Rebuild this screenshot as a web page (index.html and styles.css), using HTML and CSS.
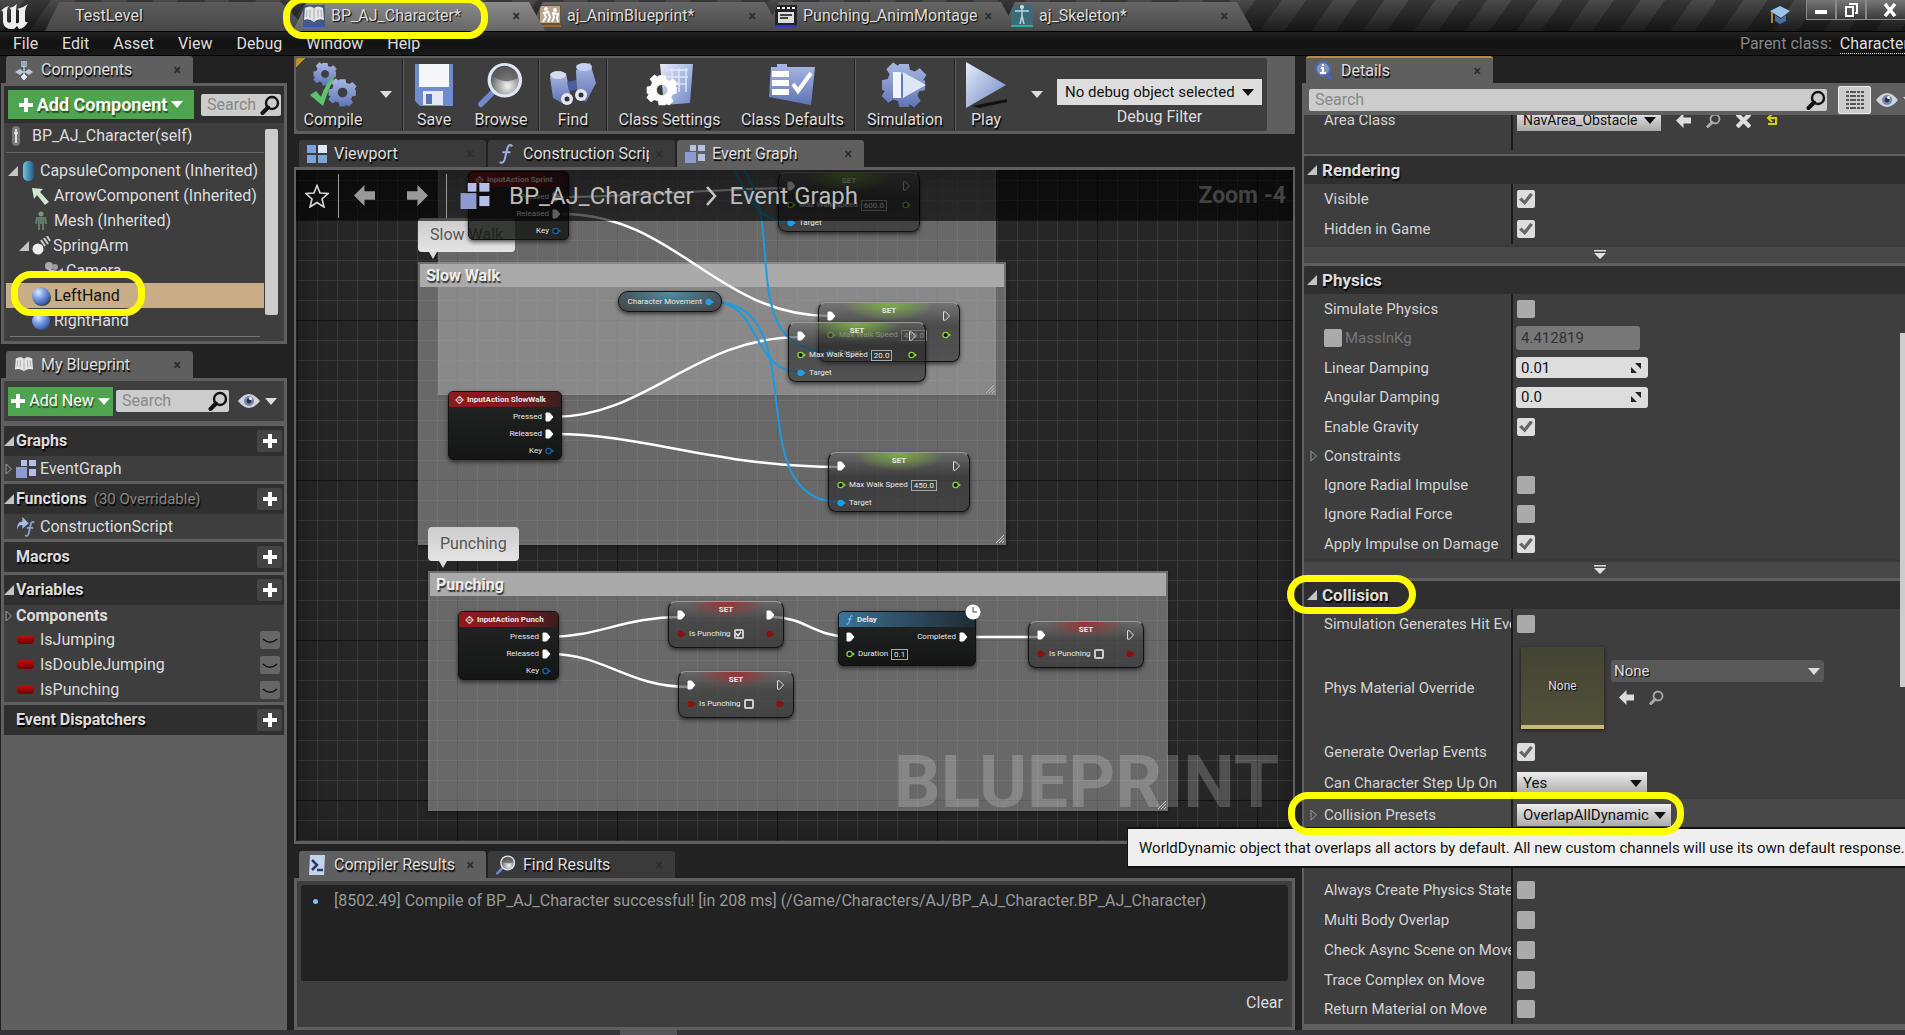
FILE: index.html
```html
<!DOCTYPE html>
<html lang="en">
<head>
<meta charset="utf-8">
<title>BP_AJ_Character</title>
<link rel="stylesheet" href="styles.css">
</head>
<body>
<svg class="defs" aria-hidden="true">
  <defs>
    <linearGradient id="ice" x1="0" y1="0" x2="1" y2="1"><stop offset="0" stop-color="#e6ecfa"/><stop offset="1" stop-color="#6f86c4"/></linearGradient>
    <linearGradient id="steel" x1="0" y1="0" x2="0" y2="1"><stop offset="0" stop-color="#a9b8e4"/><stop offset="1" stop-color="#5f74b4"/></linearGradient>
    <linearGradient id="cyl" x1="0" y1="0" x2="1" y2="0"><stop offset="0" stop-color="#6fc3e6"/><stop offset="1" stop-color="#1f5a7c"/></linearGradient>
    <radialGradient id="ball" cx=".35" cy=".3" r=".8"><stop offset="0" stop-color="#dfe8ff"/><stop offset=".5" stop-color="#6f93dd"/><stop offset="1" stop-color="#2c4a96"/></radialGradient>
    <radialGradient id="lens" cx=".6" cy=".7" r=".8"><stop offset="0" stop-color="#f4f4f4"/><stop offset=".5" stop-color="#9a9a9a"/><stop offset="1" stop-color="#333"/></radialGradient>
    <symbol id="search" viewBox="0 0 20 20"><circle cx="12" cy="8" r="6" fill="none" stroke="currentColor" stroke-width="2.4"/><path d="M8 12.500L2.500 18" stroke="currentColor" stroke-width="4" stroke-linecap="round"/></symbol>
    <symbol id="plus" viewBox="0 0 14 14"><path d="M5 0h4v5h5v4H9v5H5V9H0V5h5z" fill="currentColor"/></symbol>
    <symbol id="open" viewBox="0 0 10 10"><path d="M10 0v10H0z" fill="#c4c4c4"/></symbol>
    <symbol id="shut" viewBox="0 0 8 12"><path d="M1 1l5.500 5L1 11z" fill="none" stroke="#9a9a9a"/></symbol>
    <symbol id="eye" viewBox="0 0 22 16"><path d="M0 8Q11-6 22 8Q11 22 0 8z" fill="#cfd3dc"/><circle cx="11" cy="8" r="5" fill="#7686ad"/><circle cx="11" cy="8" r="2.400" fill="#26304d"/><circle cx="12.500" cy="5.500" r="1.500" fill="#fff"/></symbol>
    <symbol id="graph" viewBox="0 0 20 18"><g fill="#b5bfe6"><rect x="5" y="0" width="6" height="6"/><rect x="13" y="0" width="7" height="6"/><rect x="13" y="9" width="7" height="7"/><path d="M0 7h11v11H0z" fill="#8d9bd0"/></g></symbol>
    <symbol id="book" viewBox="0 0 22 20"><path d="M2 3Q7 0 11 3Q15 0 20 3L21 15Q15 13 11 17Q6 13 1 15z" fill="#e5e5e5"/><path d="M11 3v13M4 5l-.5 7M7 4.500v8M15 4.500v8M18 5l.5 7" stroke="#aaa" fill="none"/></symbol>
    <symbol id="gear" viewBox="-12 -12 24 24"><path fill-rule="evenodd" d="M-2.500-11h5l.6 3 2.500 1 2.600-1.700 3.500 3.500L10-2.500l1 .2v5l-3 .6-1 2.300 1.700 2.600-3.500 3.500L2.900 10l-.4 1.500h-5l-.6-3-2.500-1-2.600 1.700-3.500-3.500L-10 3.100-11.500 2.500v-5l3-.6 1-2.500-1.700-2.600 3.500-3.500 2.600 1.700zM0-4a4 4 0 1 0 .1 0z"/></symbol>
    <symbol id="glass" viewBox="0 0 48 48"><path d="M17 30L3 44" stroke="#6f88c8" stroke-width="6" stroke-linecap="round"/><ellipse cx="28" cy="19" rx="18" ry="18" fill="#dfe6f8"/><ellipse cx="28" cy="19" rx="14.500" ry="15" fill="url(#lens)"/><path d="M16 15Q25 2 38 8Q42 13 41 17Q30 24 16 15z" fill="#555" opacity=".7"/></symbol>
    <symbol id="back" viewBox="0 0 20 20"><path d="M0 10L10 0v6h10v8H10v6z" fill="currentColor"/></symbol>
    <symbol id="func" viewBox="0 0 16 22"><path d="M15 2.500Q11-1 9.500 5L6.500 17Q5 22 1 20M4 9h9" fill="none" stroke="currentColor" stroke-width="2.200"/></symbol>
    <symbol id="exec" viewBox="0 0 9 10"><path d="M1 1h3.500L8 5 4.500 9H1z" fill="#fff" stroke="#fff"/></symbol>
    <symbol id="execo" viewBox="0 0 9 10"><path d="M1.500.8h2L7.500 5 3.500 9.200h-2z" fill="none" stroke="#ddd"/></symbol>
    <symbol id="pin" viewBox="0 0 10 8"><circle cx="4" cy="4" r="3" fill="#111" stroke="currentColor" stroke-width="1.400"/><path d="M7.500 2L10 4 7.500 6z" fill="currentColor"/></symbol>
    <symbol id="pinf" viewBox="0 0 10 8"><circle cx="4" cy="4" r="3.500" fill="currentColor"/><path d="M7 2L10 4 7 6z" fill="currentColor"/></symbol>
    <symbol id="event" viewBox="0 0 10 10"><path d="M5 1l4 4-4 4-4-4zM3.500 5H7" fill="none" stroke="#f3dada" stroke-width="1.200"/></symbol>
    <symbol id="more" viewBox="0 0 12 10"><path d="M0 0h12v1.500H0zM0 3h12L6 9z" fill="#e0e0e0"/></symbol>
    <symbol id="grip" viewBox="0 0 8 8"><path d="M0 8L8 0M3 8l5-5M6 8l2-2" stroke="#ccc"/></symbol>
    <symbol id="drag" viewBox="0 0 12 12"><path d="M5 1h6v6zM1 5v6h6z" fill="#222"/></symbol>
  </defs>
</svg>

<header class="titlebar">
  <svg class="logo" viewBox="0 0 32 30"><path d="M1 9Q4 5 9 4Q7 6 7 9V19Q8 22 11 20V8Q11 6 9 6Q14 5 17 2Q16 5 16 8V21Q18 22 19 20V9Q19 7 17 7Q23 6 28 2Q25 6 25 10V19Q26 21 28 20Q24 27 19 27L17 24L14 27Q4 28 3 20V11Q3 8 1 9z" fill="#eee"/></svg>
  <nav class="apptabs">
    <a class="apptab plain" href="#level"><span>TestLevel</span></a>
    <a class="apptab active" href="#bp"><svg class="ticon blue"><use href="#book"/></svg><span>BP_AJ_Character*</span><i class="x">×</i></a>
    <a class="apptab" href="#anim"><svg class="ticon brown" viewBox="0 0 22 20"><path d="M1 1h20v17H1z" fill="#b8a58c"/><circle cx="7" cy="4" r="2" fill="#fff"/><circle cx="16" cy="5" r="2" fill="#fff"/><path d="M4 17l3-5-2-4 4-1 2 5-2 5M13 17l2-5-1-4 5 1-1 4 1 4" fill="none" stroke="#fff" stroke-width="2"/></svg><span>aj_AnimBlueprint*</span><i class="x">×</i></a>
    <a class="apptab" href="#montage"><svg class="ticon indigo" viewBox="0 0 22 20"><path d="M1 1h20v17H1z" fill="#222"/><path d="M2 3h3m2 0h3m2 0h3m2 0h3" stroke="#fff" stroke-width="2"/><path d="M3 7h16v11H3z" fill="#ddd"/><path d="M5 10h12M5 13h8" stroke="#444" stroke-width="2"/></svg><span>Punching_AnimMontage</span><i class="x">×</i></a>
    <a class="apptab" href="#skeleton"><svg class="ticon teal" viewBox="0 0 22 20"><path d="M0 0h22v20H0z" fill="#3d6a78"/><path d="M11 3v8M4 6h14M11 11l-2 8M11 11l2 8" stroke="#b5d5dd" stroke-width="1.500"/><circle cx="11" cy="2" r="2" fill="#cfe4ea"/></svg><span>aj_Skeleton*</span><i class="x">×</i></a>
  </nav>
  <svg class="cap" viewBox="0 0 20 20"><path d="M0 6L10 1l10 5-9 7z" fill="#9cc4ea"/><path d="M5 10l6 4 5-4v6l-6 3-5-3z" fill="#4b6f9c"/><path d="M2 7v11" stroke="#b5804a" stroke-width="2"/></svg>
  <div class="winbtns">
    <button aria-label="Minimize"><svg viewBox="0 0 14 14"><path d="M1 7h12v4H1z" fill="#fff"/></svg></button>
    <button aria-label="Restore"><svg viewBox="0 0 14 14"><path d="M5 1h8v9h-2M2 4h7v9H2z" fill="none" stroke="#fff" stroke-width="2"/></svg></button>
    <button aria-label="Close"><svg viewBox="0 0 14 14"><path d="M2 1l10 12M12 1L2 13" stroke="#fff" stroke-width="3.500"/></svg></button>
  </div>
  <span class="mark mark-tab"></span>
</header>

<div class="menubar">
  <nav><a href="#f">File</a><a href="#e">Edit</a><a href="#a">Asset</a><a href="#v">View</a><a href="#d">Debug</a><a href="#w">Window</a><a href="#h">Help</a></nav>
  <p>Parent class: <a href="#c">Character</a></p>
</div>

<main class="work">
  <aside class="left">
    <section>
      <h2 class="tab on"><svg class="i20" viewBox="0 0 20 20"><path d="M7 1h6v6H7z" fill="#9ab"/><path d="M1 12l5-3 4 3-4 3zM10 12l5-3 4 3-4 3z" fill="#b9c5de"/><path d="M10 6v8M7 17l3-3 3 3-3 3z" stroke="#dfe5f3" fill="#dfe5f3"/></svg>Components<i class="x">×</i></h2>
      <div class="frame comps">
        <div class="addbar">
          <button class="green big"><svg><use href="#plus"/></svg>Add Component<b class="tri"></b></button>
          <label class="find"><input placeholder="Search" aria-label="Search components"><svg><use href="#search"/></svg></label>
        </div>
        <ul class="tree">
          <li class="self"><svg class="i20" viewBox="0 0 20 20"><rect x="6" y="0" width="8" height="20" rx="4" fill="#777"/><path d="M10 3v14M8 7h4" stroke="#ddd" stroke-width="2"/></svg>BP_AJ_Character(self)</li>
          <li class="d0"><svg class="tw"><use href="#open"/></svg><svg class="i20" viewBox="0 0 20 20"><rect x="4" y="0" width="11" height="20" rx="5" fill="url(#cyl)"/></svg>CapsuleComponent (Inherited)</li>
          <li class="d1"><svg class="i20" viewBox="0 0 20 20"><path d="M1 2l11 1-3 3 9 10-4 3L6 9l-3 4z" fill="#cfe6cf"/></svg>ArrowComponent (Inherited)</li>
          <li class="d1"><svg class="i20" viewBox="0 0 20 20"><circle cx="10" cy="3" r="2.500" fill="#7b9a80"/><path d="M5 6h10l1 7h-2l-1-4v10h-2v-6H9v6H7V9l-1 4H4z" fill="#5f7d65"/></svg>Mesh (Inherited)</li>
          <li class="d1 tight"><svg class="tw"><use href="#open"/></svg><svg class="i20" viewBox="0 0 20 20"><circle cx="7" cy="13" r="5.500" fill="#eee"/><path d="M10 4l4 6M13 2l4 6M16 0l3 5" stroke="#ccc" stroke-width="2"/></svg>SpringArm</li>
          <li class="d2"><svg class="i20" viewBox="0 0 20 20"><circle cx="5" cy="5" r="4" fill="#aaa"/><circle cx="11" cy="6" r="3" fill="#999"/><path d="M5 8l9 2 5-3v7l-5-2-2 5-8-4z" fill="#c0c0c0"/></svg>Camera</li>
          <li class="d1 picked"><svg class="i20" viewBox="0 0 20 20"><ellipse cx="11" cy="12" rx="9" ry="8" fill="#4a4038"/><circle cx="10" cy="10" r="9" fill="url(#ball)"/></svg>LeftHand<span class="mark mark-hand"></span></li>
          <li class="d1"><svg class="i20" viewBox="0 0 20 20"><circle cx="10" cy="10" r="9" fill="url(#ball)"/></svg>RightHand</li>
        </ul>
      </div>
    </section>
    <section class="grow">
      <h2 class="tab on"><svg class="i20"><use href="#book"/></svg>My Blueprint<i class="x">×</i></h2>
      <div class="frame mybp">
        <div class="newbar">
          <button class="green"><svg><use href="#plus"/></svg>Add New<b class="tri"></b></button>
          <label class="find"><input placeholder="Search" aria-label="Search blueprint"><svg><use href="#search"/></svg></label>
          <svg class="eye"><use href="#eye"/></svg><b class="tri"></b>
        </div>
        <div class="cat"><h3><svg class="tw"><use href="#open"/></svg>Graphs<button aria-label="Add graph"><svg><use href="#plus"/></svg></button></h3>
          <p><svg class="sh"><use href="#shut"/></svg><svg class="i20"><use href="#graph"/></svg>EventGraph</p></div>
        <div class="cat"><h3><svg class="tw"><use href="#open"/></svg>Functions <small>(30 Overridable)</small><button aria-label="Add function"><svg><use href="#plus"/></svg></button></h3>
          <p><svg class="i20 fn" viewBox="0 0 20 22"><path d="M0 14Q0 5 6 5V0l7 7-7 6V9Q2 8 0 14z" fill="#a9bce0"/><path d="M19 6Q16 4 15 9L13 18Q12 22 9 20M11 12h7" fill="none" stroke="#8fa0d8" stroke-width="2"/></svg>ConstructionScript</p></div>
        <div class="cat"><h3>Macros<button aria-label="Add macro"><svg><use href="#plus"/></svg></button></h3></div>
        <div class="cat vars"><h3><svg class="tw"><use href="#open"/></svg>Variables<button aria-label="Add variable"><svg><use href="#plus"/></svg></button></h3>
          <p class="bold"><svg class="sh"><use href="#shut"/></svg>Components</p>
          <p><i class="pill"></i>IsJumping<button class="lid" aria-label="Toggle IsJumping"><svg viewBox="0 0 20 20"><path d="M2 9Q10 16 18 9" fill="none" stroke="#111" stroke-width="1.500"/></svg></button></p>
          <p><i class="pill"></i>IsDoubleJumping<button class="lid" aria-label="Toggle IsDoubleJumping"><svg viewBox="0 0 20 20"><path d="M2 9Q10 16 18 9" fill="none" stroke="#111" stroke-width="1.500"/></svg></button></p>
          <p><i class="pill"></i>IsPunching<button class="lid" aria-label="Toggle IsPunching"><svg viewBox="0 0 20 20"><path d="M2 9Q10 16 18 9" fill="none" stroke="#111" stroke-width="1.500"/></svg></button></p></div>
        <div class="cat"><h3>Event Dispatchers<button aria-label="Add dispatcher"><svg><use href="#plus"/></svg></button></h3></div>
      </div>
    </section>
  </aside>

  <div class="center">
    <div class="toolbar">
      <div class="tools">
        <button class="tool w78"><svg viewBox="0 0 48 46"><g fill="url(#steel)"><use href="#gear" x="4" y="0" width="24" height="24"/><use href="#gear" x="19" y="16" width="29" height="29"/></g><path d="M1 33l6-4 5 6Q17 20 27 12Q20 26 14 44z" fill="#5cc46a"/></svg>Compile</button>
        <b class="tri drop"></b><i class="sep"></i>
        <button class="tool w60"><svg viewBox="0 0 48 46"><path d="M5 2h38v42H10l-5-5z" fill="#6f8ccf"/><path d="M9 2h30v23H9z" fill="#f4f6fa"/><path d="M13 29h20v14H13z" fill="#e4e9f5"/><path d="M16 32h6v10h-6z" fill="#5674b8"/></svg>Save</button>
        <button class="tool w72"><svg><use href="#glass"/></svg>Browse</button>
        <i class="sep"></i>
        <button class="tool w66"><svg viewBox="0 0 48 46"><path d="M1 15l16-4 5 26-9 4-9-5z" fill="url(#steel)"/><path d="M27 8l14-7 6 20-10 19-9-4z" fill="url(#steel)"/><path d="M18 20l9-2v10l-7 1z" fill="#4a61a0"/><ellipse cx="9" cy="13" rx="8" ry="4" fill="#d5dcf0"/><ellipse cx="35" cy="5" rx="8" ry="4" fill="#c5d0ee"/><circle cx="18" cy="37" r="6" fill="#e2e6f0"/><circle cx="18" cy="37" r="2.500" fill="#333"/><circle cx="32" cy="33" r="6" fill="#e2e6f0"/><circle cx="32" cy="33" r="2.500" fill="#333"/></svg>Find</button>
        <i class="sep"></i>
        <button class="tool w124"><svg viewBox="0 0 48 46"><path d="M14 2h33l-3 39-26 2z" fill="url(#ice)"/><path d="M20 8h22M20 15h22M20 22h21M26 6v18M33 6v24M40 6v24" stroke="#dfe6fa" stroke-width="1.500"/><g fill="#fff"><use href="#gear" x="0" y="12" width="32" height="32"/></g></svg>Class Settings</button>
        <button class="tool w124"><svg viewBox="0 0 48 46"><path d="M2 5h6V2h10v3h28l-4 38L0 35z" fill="url(#steel)"/><path d="M3 9h17v6H3zM3 18h17v6H3zM3 27h17v6H3z" fill="#fff"/><path d="M24 22l5 7L42 11" fill="none" stroke="#fff" stroke-width="4"/></svg>Class Defaults</button>
        <i class="sep"></i>
        <button class="tool w100"><svg viewBox="0 0 48 46"><g fill="url(#steel)"><use href="#gear" x="0" y="0" width="46" height="46"/></g><circle cx="23" cy="23" r="11" fill="#6478b8"/><path d="M12 10h8v26h-8z" fill="#f0f4fb"/><path d="M22 10l23 13-23 13z" fill="#dce8f4"/></svg>Simulation</button>
        <i class="sep"></i>
        <button class="tool w60"><svg viewBox="0 0 48 46"><path d="M10 44l35-7v3l-28 6z" fill="#111"/><path d="M4 0l40 23L4 46z" fill="url(#ice)"/></svg>Play</button>
        <b class="tri drop play"></b>
        <div class="debug"><span class="pick"><select id="dbg"><option>No debug object selected</option></select></span><label for="dbg">Debug Filter</label></div>
      </div>
    </div>

    <div class="tabs">
      <h2 class="tab"><svg class="i20" viewBox="0 0 20 20"><path d="M0 1h9v8H0zM11 11h9v8h-9zM0 11h9v8H0z" fill="#7ba4d8"/><path d="M11 1h9v8h-9z" fill="#dfe9f5"/></svg>Viewport<i class="x">×</i></h2>
      <h2 class="tab"><svg class="i20 fblue"><use href="#func"/></svg><span class="clip">Construction Script</span><i class="x">×</i></h2>
      <h2 class="tab on"><svg class="i20"><use href="#graph"/></svg>Event Graph<i class="x">×</i></h2>
    </div>

    <div class="graph">
      <div class="comment sprintbox"><svg class="grip"><use href="#grip"/></svg></div>
      <div class="comment slowbox"><h4>Slow Walk</h4><svg class="grip"><use href="#grip"/></svg></div>
      <div class="comment punchbox"><h4>Punching</h4><svg class="grip"><use href="#grip"/></svg></div>
      <div class="bubble b1">Slow Walk</div>
      <div class="bubble b2">Punching</div>
      <svg class="wires">
        <g fill="none" stroke="#fff" stroke-width="2.500">
          <path d="M266 27C340 27 420 19 490 18" stroke-width="2"/>
          <path d="M266 44C380 44 420 146 534 146"/>
          <path d="M258 247C350 247 400 167 504 167"/>
          <path d="M258 264C350 264 420 297 544 297"/>
          <path d="M254 467C300 467 330 447 384 447"/>
          <path d="M254 484C310 484 330 517 394 517"/>
          <path d="M476 447C508 447 520 467 554 467"/>
          <path d="M670 467H744"/>
        </g>
        <g fill="none" stroke="#1b9be0" stroke-width="2">
          <path d="M438 0C456 30 460 51 494 52"/>
          <path d="M448 0C490 60 440 180 534 182"/>
          <path d="M418 132C465 132 455 202 504 202"/>
          <path d="M418 132C520 132 440 332 544 332"/>
        </g>
      </svg>

      <div class="node ev n-sprint"><h5><svg><use href="#event"/></svg>InputAction Sprint</h5><p>Pressed<svg><use href="#exec"/></svg></p><p>Released<svg><use href="#exec"/></svg></p><p>Key<svg class="navy"><use href="#pin"/></svg></p></div>
      <div class="node ev n-slow"><h5><svg><use href="#event"/></svg>InputAction SlowWalk</h5><p>Pressed<svg><use href="#exec"/></svg></p><p>Released<svg><use href="#exec"/></svg></p><p>Key<svg class="navy"><use href="#pin"/></svg></p></div>
      <div class="node ev n-punch"><h5><svg><use href="#event"/></svg>InputAction Punch</h5><p>Pressed<svg><use href="#exec"/></svg></p><p>Released<svg><use href="#exec"/></svg></p><p>Key<svg class="navy"><use href="#pin"/></svg></p></div>
      <div class="node var">Character Movement<svg class="sky"><use href="#pinf"/></svg></div>

      <div class="node set lime n-s0"><p class="top"><svg><use href="#exec"/></svg><b>SET</b><svg><use href="#execo"/></svg></p><p><svg class="lg"><use href="#pin"/></svg>Max Walk Speed<em>600.0</em><svg class="lg end"><use href="#pin"/></svg></p><p><svg class="sky"><use href="#pinf"/></svg>Target</p></div>
      <div class="node set lime n-s1"><p class="top"><svg><use href="#exec"/></svg><b>SET</b><svg><use href="#execo"/></svg></p><p><svg class="lg"><use href="#pin"/></svg>Max Walk Speed<em>450.0</em><svg class="lg end"><use href="#pin"/></svg></p><p><svg class="sky"><use href="#pinf"/></svg>Target</p></div>
      <div class="node set lime n-s2"><p class="top"><svg><use href="#exec"/></svg><b>SET</b><svg><use href="#execo"/></svg></p><p><svg class="lg"><use href="#pin"/></svg>Max Walk Speed<em>20.0</em><svg class="lg end"><use href="#pin"/></svg></p><p><svg class="sky"><use href="#pinf"/></svg>Target</p></div>
      <div class="node set lime n-s3"><p class="top"><svg><use href="#exec"/></svg><b>SET</b><svg><use href="#execo"/></svg></p><p><svg class="lg"><use href="#pin"/></svg>Max Walk Speed<em>450.0</em><svg class="lg end"><use href="#pin"/></svg></p><p><svg class="sky"><use href="#pinf"/></svg>Target</p></div>
      <div class="node set ruby n-p1"><p class="top"><svg><use href="#exec"/></svg><b>SET</b><svg><use href="#exec"/></svg></p><p><svg class="red"><use href="#pinf"/></svg><label for="p1">Is Punching</label><input id="p1" type="checkbox" checked><svg class="red end"><use href="#pinf"/></svg></p></div>
      <div class="node set ruby n-p2"><p class="top"><svg><use href="#exec"/></svg><b>SET</b><svg><use href="#execo"/></svg></p><p><svg class="red"><use href="#pinf"/></svg><label for="p2">Is Punching</label><input id="p2" type="checkbox"><svg class="red end"><use href="#pinf"/></svg></p></div>
      <div class="node set ruby n-p3"><p class="top"><svg><use href="#exec"/></svg><b>SET</b><svg><use href="#execo"/></svg></p><p><svg class="red"><use href="#pinf"/></svg><label for="p3">Is Punching</label><input id="p3" type="checkbox"><svg class="red end"><use href="#pinf"/></svg></p></div>
      <div class="node delay"><h5><svg><use href="#func"/></svg>Delay</h5><p><svg><use href="#exec"/></svg><span class="end">Completed</span><svg><use href="#exec"/></svg></p><p><svg class="lg"><use href="#pin"/></svg>Duration<em>0.1</em></p>
        <svg class="clock" viewBox="0 0 16 16"><circle cx="8" cy="8" r="7.500" fill="#fff"/><path d="M8 3v5h4" fill="none" stroke="#444"/></svg></div>

      <div class="watermark">BLUEPRINT</div>
      <div class="crumbs">
        <svg class="star" viewBox="0 0 24 24"><path d="M12 1.500l3 7.500 8 .5-6 5.500 2 8-7-4.500L5 23l2-8-6-5.500 8-.5z" fill="none" stroke="#d8d8d8" stroke-width="1.600"/></svg>
        <i></i><svg class="arr"><use href="#back"/></svg><svg class="arr fwd"><use href="#back"/></svg><i></i>
        <svg class="gi"><use href="#graph"/></svg><span>BP_AJ_Character</span>
        <svg class="chev" viewBox="0 0 12 20"><path d="M2 1l8 9-8 9" fill="none" stroke="#c8c8c8" stroke-width="2.500"/></svg><span>Event Graph</span>
        <b>Zoom -4</b>
      </div>
    </div>

    <div class="tabs low">
      <h2 class="tab on"><svg class="i20" viewBox="0 0 20 20"><path d="M3 0h15l-1 20H2z" fill="#c3d3ee"/><path d="M5 5l5 5-5 5M10 15h6" fill="none" stroke="#2c3c68" stroke-width="2.500"/></svg>Compiler Results<i class="x">×</i></h2>
      <h2 class="tab"><svg class="i20"><use href="#glass"/></svg>Find Results<i class="x">×</i></h2>
    </div>
    <div class="frame log">
      <div class="out"><i></i>[8502.49] Compile of BP_AJ_Character successful! [in 208 ms] (/Game/Characters/AJ/BP_AJ_Character.BP_AJ_Character)</div>
      <button>Clear</button>
    </div>
  </div>

  <aside class="right">
    <h2 class="tab on gold"><svg class="i20" viewBox="0 0 20 20"><path d="M12 13l6 6" stroke="#4b62b8" stroke-width="3"/><circle cx="9" cy="8" r="7" fill="#8595b8" stroke="#4b69b8" stroke-width="2"/><path d="M9 3v2M7 7h2v5M6 12h6" stroke="#fff" stroke-width="2" fill="none"/></svg>Details<i class="x">×</i></h2>
    <div class="details">
      <div class="dsearch">
        <label class="find"><input placeholder="Search" aria-label="Search details"><svg><use href="#search"/></svg></label>
        <button class="matrix" aria-label="Property matrix"><svg viewBox="0 0 18 18"><path d="M0 1h18M0 5h18M0 9h18M0 13h18M0 17h18" stroke="#555" stroke-width="2" stroke-dasharray="3 1 6 1"/></svg></button>
        <svg class="eye"><use href="#eye"/></svg><b class="tri"></b>
      </div>
      <div class="group cut"><div class="row"><label for="area">Area Class</label><div class="val"><span class="pick grey w144"><select id="area"><option>NavArea_Obstacle</option></select></span><svg class="act"><use href="#back"/></svg><svg class="act dim"><use href="#search"/></svg><svg class="act" viewBox="0 0 14 14"><path d="M1 1l12 12M13 1L1 13" stroke="#ddd" stroke-width="4"/></svg><svg class="act small" viewBox="0 0 12 12"><path d="M2 10h8V4H3M6 0L2 4l4 4" fill="none" stroke="#d6d000" stroke-width="2"/></svg></div></div></div>

      <div class="group"><h3><svg class="tw"><use href="#open"/></svg>Rendering</h3>
        <div class="row"><label for="c1">Visible</label><div class="val"><input id="c1" type="checkbox" checked></div></div>
        <div class="row"><label for="c2">Hidden in Game</label><div class="val"><input id="c2" type="checkbox" checked></div></div>
        <button class="adv" aria-label="Show advanced"><svg><use href="#more"/></svg></button></div>

      <div class="group"><h3><svg class="tw"><use href="#open"/></svg>Physics</h3>
        <div class="row short"><label for="c3">Simulate Physics</label><div class="val"><input id="c3" type="checkbox"></div></div>
        <div class="row off"><label class="mass"><input type="checkbox">MassInKg</label><div class="val"><span class="num dis"><input value="4.412819" aria-label="Mass in kg" disabled></span></div></div>
        <div class="row short"><label for="n1">Linear Damping</label><div class="val"><span class="num"><input id="n1" value="0.01"><svg><use href="#drag"/></svg></span></div></div>
        <div class="row"><label for="n2">Angular Damping</label><div class="val"><span class="num"><input id="n2" value="0.0"><svg><use href="#drag"/></svg></span></div></div>
        <div class="row short"><label for="c4">Enable Gravity</label><div class="val"><input id="c4" type="checkbox" checked></div></div>
        <div class="row short"><span class="lab"><svg class="sh"><use href="#shut"/></svg>Constraints</span><div class="val"></div></div>
        <div class="row short"><label for="c5">Ignore Radial Impulse</label><div class="val"><input id="c5" type="checkbox"></div></div>
        <div class="row"><label for="c6">Ignore Radial Force</label><div class="val"><input id="c6" type="checkbox"></div></div>
        <div class="row"><label for="c7">Apply Impulse on Damage</label><div class="val"><input id="c7" type="checkbox" checked></div></div>
        <button class="adv" aria-label="Show advanced"><svg><use href="#more"/></svg></button></div>

      <div class="group last"><h3><svg class="tw"><use href="#open"/></svg>Collision<span class="mark mark-col"></span></h3>
        <div class="row"><label for="c8">Simulation Generates Hit Events</label><div class="val"><input id="c8" type="checkbox"></div></div>
        <div class="row tall"><label for="phys">Phys Material Override</label><div class="val"><span class="thumb">None</span><div class="asset"><span class="pick dark"><select id="phys"><option>None</option></select></span><div><svg class="act"><use href="#back"/></svg><svg class="act dim"><use href="#search"/></svg></div></div></div></div>
        <div class="row"><label for="c9">Generate Overlap Events</label><div class="val"><input id="c9" type="checkbox" checked></div></div>
        <div class="row mid"><label for="step">Can Character Step Up On</label><div class="val"><span class="pick grey w130"><select id="step"><option>Yes</option></select></span></div></div>
        <div class="row mid lit"><label for="preset"><svg class="sh"><use href="#shut"/></svg>Collision Presets</label><div class="val"><span class="pick grey w154"><select id="preset"><option>OverlapAllDynamic</option></select></span></div>
          <div class="tip" role="tooltip">WorldDynamic object that overlaps all actors by default. All new custom channels will use its own default response.</div><span class="mark mark-pre"></span></div>
        <div class="row gap"><span class="lab"></span><div class="val"></div></div>
        <div class="row"><label for="c10">Always Create Physics State</label><div class="val"><input id="c10" type="checkbox"></div></div>
        <div class="row"><label for="c11">Multi Body Overlap</label><div class="val"><input id="c11" type="checkbox"></div></div>
        <div class="row"><label for="c12">Check Async Scene on Move</label><div class="val"><input id="c12" type="checkbox"></div></div>
        <div class="row short"><label for="c13">Trace Complex on Move</label><div class="val"><input id="c13" type="checkbox"></div></div>
        <div class="row"><label for="c14">Return Material on Move</label><div class="val"><input id="c14" type="checkbox"></div></div>
      </div>
      <i class="thumbbar"></i>
    </div>
  </aside>
</main>
<footer class="strip"><i></i></footer>
</body>
</html>
```
FILE: styles.css
```css
* { box-sizing: border-box; margin: 0; padding: 0; }
html { height: 100%; overflow: hidden; background: #222; }
body { min-height: 100%; display: flex; flex-direction: column; overflow: hidden; background: #222; color: #ddd; font: 16px/20px Roboto, "Liberation Sans", sans-serif; }
button, input, select { font: inherit; color: inherit; border: 0; background: none; }
a { color: inherit; text-decoration: none; }
ul { list-style: none; }
i { font-style: normal; }
svg { flex: none; display: block; }
.defs { position: absolute; width: 0; height: 0; }
.i20 { width: 20px; height: 20px; }
.tri { flex: none; width: 0; height: 0; border: 6px solid transparent; border-top: 7px solid currentColor; border-bottom: 0; }
.mark { position: absolute; z-index: 20; border: 7px solid #ff0; border-radius: 20px; pointer-events: none; }

/* title bar */
.titlebar { position: relative; display: flex; height: 31px; background: repeating-linear-gradient(125deg, #0000 0 20px, #0004 20px 42px), linear-gradient(#4a4a4a, #1c1c1c); }
.logo { width: 32px; height: 30px; margin: 2px 13px 0 0; }
.apptabs { display: flex; }
.apptab { display: flex; align-items: center; width: 252px; margin: 2px 0 0 -16px; padding: 0 25px 2px 10px; gap: 6px; font-size: 16px; text-shadow: 1px 1px 1px #000; background: linear-gradient(#666, #4b4b4b); clip-path: polygon(14px 0, 236px 0, 100% 100%, 0 100%); }
.apptab.plain { width: 264px; margin-left: 0; padding-left: 30px; background: linear-gradient(#5a5a5a, #484848); }
.apptab.active { position: relative; z-index: 1; background: linear-gradient(#8a8a8a, #666); }
.x { margin-left: auto; font-size: 14px; font-weight: 700; color: #2c2c2c; text-shadow: none; }
.ticon { width: 22px; height: 22px; border-bottom: 2px solid #35c; }
.ticon.blue { background: #445a86; }
.ticon.brown { border-color: #a5682a; background: #6b5030; }
.ticon.indigo { border-color: #33c; background: #223; }
.ticon.teal { border-color: #3aa; }
.cap { width: 20px; height: 20px; margin: 5px 16px 0 auto; }
.winbtns { display: flex; height: 20px; }
.winbtns button { display: flex; align-items: center; justify-content: center; width: 30px; border: 1px solid #888; border-top: 0; background: linear-gradient(#777, #3a3a3a); }
.winbtns button:last-child { width: 39px; padding-left: 8px; border-right: 0; }
.winbtns svg { width: 14px; height: 14px; }
.mark-tab { left: 283px; top: -4px; width: 205px; height: 43px; }

.menubar { display: flex; justify-content: space-between; height: 25px; padding: 0 0 0 13px; line-height: 24px; border: solid #000; border-width: 1px 0; background: linear-gradient(#222, #111 45%, #1a1a1a); }
.menubar nav { display: flex; gap: 24px; }
.menubar p { color: #888; margin-right: -4px; white-space: nowrap; }
.menubar p a { color: #ddd; margin-left: 4px; border-bottom: 1px dotted #ddd; }

/* three columns */
.work { flex: 1; display: grid; grid-template-columns: 286px minmax(0, 1fr) 603px; gap: 7px; padding-left: 1px; min-height: 0; }
.left, .center, .right { display: flex; flex-direction: column; min-width: 0; }
.tab { display: flex; align-items: center; width: 187px; height: 27px; padding: 0 12px 0 8px; gap: 7px; font-weight: 400; font-size: 16px; white-space: nowrap; text-shadow: 1px 2px 1px #000; background: #3a3a3a; border-radius: 3px 3px 0 0; }
.tab.on { background: #5f5f5f; }
.tab .clip { overflow: hidden; }
.left .tab { margin-left: 5px; }
.frame { border: 3px solid #5f5f5f; background: #3e3e3e; }
.grow { flex: 1; display: flex; flex-direction: column; margin-top: 7px; }
.mybp { flex: 1; background: #5f5f5f; }

.find { position: relative; display: flex; align-items: center; height: 22px; background: #ccc; border-radius: 2px; }
.find input { width: 100%; min-width: 0; padding-left: 6px; color: #222; outline: 0; }
.find input::placeholder { color: #888; }
.find svg { width: 20px; height: 20px; margin-right: 1px; color: #111; }
.green { display: flex; align-items: center; justify-content: center; gap: 4px; height: 29px; color: #fff; background: #4fa54f; white-space: nowrap; text-shadow: 1px 2px 1px #0008; }
.green svg { width: 14px; height: 14px; }
.green.big { width: 186px; font-weight: 700; font-size: 18px; }
.addbar { display: flex; align-items: center; gap: 7px; height: 37px; padding: 0 2px 0 4px; background: #2f2f2f; }
.addbar .find { width: 80px; }
.comps { height: 261px; }
.tree { position: relative; padding: 0 20px 0 2px; }
.tree::before { content: ""; position: absolute; right: 6px; top: 6px; width: 13px; height: 186px; background: #ccc; border-radius: 2px; }
.tree::after { content: ""; position: absolute; left: 6px; right: 24px; top: 213px; border-top: 1px solid #777; }
.tree li { position: relative; display: flex; align-items: center; height: 25px; gap: 3px; white-space: nowrap; }
.tree .self { height: 30px; margin-bottom: 5px; padding: 0 0 4px 0; gap: 6px; border-bottom: 1px solid #666; }
.tw { width: 10px; height: 10px; }
.tree .d0 { padding-left: 2px; gap: 1px; }
.tree .d1 { padding-left: 25px; }
.tree .d1.tight { padding-left: 13px; gap: 2px; }
.tree .d2 { padding-left: 38px; gap: 2px; }
.tree .picked { color: #111; background: #c8ad87; }
.mark-hand { left: 5px; top: -12px; width: 134px; height: 45px; }

.newbar { display: flex; align-items: center; height: 40px; padding-left: 4px; background: #3e3e3e; gap: 3px; }
.newbar .green { width: 105px; }
.newbar .find { width: 113px; }
.eye { width: 22px; height: 16px; margin: 0 2px 0 6px; }
.cat { margin-top: 3px; background: #3e3e3e; }
.newbar + .cat { margin-top: 5px; }
.cat h3 { display: flex; align-items: center; gap: 2px; height: 30px; font-size: 16px; padding: 0 2px 0 0; text-shadow: 1px 2px 1px #000; background: #2f2f2f; border-radius: 3px 3px 0 0; }
.cat h3:not(:has(.tw)) { padding-left: 12px; }
.cat small { font-size: 15px; font-weight: 400; color: #888; margin-left: 5px; }
.cat h3 button { display: flex; align-items: center; justify-content: center; width: 25px; height: 22px; margin-left: auto; color: #fff; background: #444; border-radius: 2px; }
.cat button svg { width: 14px; height: 14px; }
.cat p { display: flex; align-items: center; height: 25px; gap: 4px; padding: 0 4px 0 12px; }
.cat p:has(.sh) { padding-left: 1px; }
.cat p:has(.sh) .i20 { margin-left: -1px; }
.cat .bold { font-weight: 700; gap: 3px; }
.vars .bold { height: 22px; }
.sh { width: 8px; height: 12px; }
.pill { width: 17px; height: 9px; margin: 0 2px 0 1px; border-radius: 4px; background: linear-gradient(#c01010, #700000); }
.cat .lid { width: 20px; height: 18px; margin-left: auto; background: #666; border-radius: 2px; }
.cat .lid svg { width: 20px; height: 18px; }

/* toolbar */
.toolbar { height: 78px; padding: 2px 28px 3px 2px; background: #5f5f5f; }
.tools { display: flex; align-items: center; height: 73px; padding-right: 5px; background: linear-gradient(135deg, #c09020 7px, #3e3e3e 7px); border-radius: 3px; }
.tool { flex: none; display: flex; flex-direction: column; align-items: center; padding-top: 2px; white-space: nowrap; text-shadow: 1px 2px 1px #000; }
.tool svg { width: 50px; height: 46px; margin-bottom: 2px; }
.w60 { width: 60px; } .w66 { width: 66px; } .w72 { width: 74px; } .w78 { width: 74px; } .w100 { width: 98px; } .w124 { width: 123px; }
.drop { margin: 0 10px; }
.drop.play { margin-left: 15px; margin-right: auto; }
.sep { width: 2px; height: 71px; background: #222; border-right: 1px solid #5c5c5c; }
.debug { display: flex; flex-direction: column; align-items: center; gap: 2px; padding-top: 16px; }
.pick { position: relative; display: block; width: 205px; height: 26px; font-size: 15px; color: #111; background: #ddd; }
.pick select { width: 100%; height: 100%; appearance: none; padding-left: 8px; }
.pick::after { content: ""; position: absolute; right: 8px; top: 10px; border: 6px solid transparent; border-top: 7px solid currentColor; border-bottom: 0; pointer-events: none; }
.tabs { display: flex; gap: 2px; padding: 6px 0 0 5px; }
.tabs.low { padding-top: 7px; }
.fblue { color: #9fb0e8; }

/* graph */
.graph { position: relative; flex: 1; overflow: hidden; border: solid #5f5f5f; border-width: 3px 2px; background:
  linear-gradient(90deg, #000a 1px, #0000 1px) 1px 0 / 160px 160px,
  linear-gradient(#000a 1px, #0000 1px) 0 150px / 160px 160px,
  linear-gradient(90deg, #3a3a3a 1px, #0000 1px) 1px 0 / 20px 20px,
  linear-gradient(#3a3a3a 1px, #0000 1px) 0 10px / 20px 20px, #262626; }
.graph::after { content: ""; position: absolute; inset: 0; pointer-events: none; box-shadow: inset 0 0 40px #0005; }
.comment { position: absolute; background: #aaaaaa80; border: 2px solid #8883; box-shadow: 0 2px 4px #0005; }
.comment h4 { height: 23px; padding-left: 6px; font-size: 16px; line-height: 24px; color: #eee; background: #aaa; text-shadow: 1px 2px 1px #333; }
.grip { position: absolute; right: 0; bottom: 0; width: 8px; height: 8px; }
.sprintbox { left: 142px; top: -40px; width: 558px; height: 265px; }
.slowbox { left: 122px; top: 92px; width: 588px; height: 283px; }
.punchbox { left: 132px; top: 401px; width: 740px; height: 240px; }
.bubble { position: absolute; height: 34px; padding: 0 12px; font-size: 16px; line-height: 34px; color: #555; background: linear-gradient(#ccc, #e4e4e4); border-radius: 4px; }
.bubble::after { content: ""; position: absolute; left: 11px; top: 34px; border: 4px solid transparent; border-top: 7px solid #ddd; border-bottom: 0; }
.b1 { left: 122px; top: 48px; }
.b2 { left: 132px; top: 357px; }
.wires { position: absolute; inset: 0; width: 100%; height: 100%; }
.node { position: absolute; font-size: 8px; line-height: 12px; color: #e8e8e8; white-space: nowrap; border: 1px solid #111; border-radius: 5px; box-shadow: 0 2px 4px #0009; }
.node p { display: flex; align-items: center; gap: 3px; }
.node svg { width: 9px; height: 10px; }
.node .end { margin-left: auto; }
.ev, .delay { background: linear-gradient(#222624, #141614); }
.node h5 { display: flex; align-items: center; gap: 3px; height: 15px; padding-left: 6px; font-size: 8px; border-radius: 4px 4px 0 0; background: linear-gradient(90deg, #8e1a1e, #7a1d20 60%, #3a1c1c); }
.ev p { height: 17px; justify-content: flex-end; padding: 3px 7px 0 0; }
.ev { height: 69px; }
.n-sprint { left: 172px; top: 1px; width: 101px; background: #141614d0; }
.n-slow { left: 152px; top: 221px; width: 114px; }
.n-punch { left: 162px; top: 441px; width: 101px; }
.var { left: 322px; top: 121px; width: 104px; height: 21px; display: flex; align-items: center; justify-content: flex-end; gap: 3px; padding-right: 7px; border-radius: 10px; background: radial-gradient(ellipse at 50% 0, #4d90a8, #4a5a60 60%, #444); }
.set { padding-top: 2px; border-radius: 8px; border-top-color: #999; }
.set p { height: 18px; padding: 0 8px; }
.set p.top { height: 21px; justify-content: space-between; }
.set .top b { align-self: flex-start; }
.lime { width: 142px; height: 60px; background: radial-gradient(ellipse 46px 18px at 50% 0, #7db040, #6f9a3c00), linear-gradient(#6669, #2229 40%, #2228); }
.ruby { width: 116px; height: 47px; background: radial-gradient(ellipse 40px 16px at 50% 0, #9c3030, #8c303000), linear-gradient(#6669, #3339 40%, #2228); }
.n-s0 { left: 482px; top: 2px; } .n-s1 { left: 522px; top: 132px; } .n-s2 { left: 492px; top: 152px; width: 138px; } .n-s3 { left: 532px; top: 282px; }
.n-p1 { left: 372px; top: 431px; } .n-p2 { left: 382px; top: 501px; } .n-p3 { left: 732px; top: 451px; }
.node em { font-style: normal; line-height: 9px; padding: 0 2px; border: 1px solid #aaa; }
.node input { appearance: none; width: 10px; height: 10px; border: 2px solid #ccc; border-radius: 2px; }
.node input:checked { position: relative; }
.node input:checked::after { content: ""; position: absolute; inset: 0; background: #eee; clip-path: polygon(0 50%, 20% 30%, 40% 60%, 85% 0, 100% 20%, 40% 100%); }
.lg { color: #8ed335; } .sky { color: #1ea0e8; } .red { color: #8c1010; } .navy { color: #1560b8; }
.delay { left: 542px; top: 441px; width: 138px; height: 55px; }
.delay h5 { background: linear-gradient(90deg, #35759a, #31536a 40%, #1e2c34); }
.delay h5 svg { color: #7cc8ff; }
.delay p { height: 17px; padding: 3px 7px 0; }
.delay .clock { position: absolute; right: -6px; top: -8px; width: 16px; height: 16px; }
.watermark { position: absolute; right: 14px; bottom: 22px; font-size: 73px; line-height: 73px; font-weight: 700; color: #fff3; }
.crumbs { position: absolute; z-index: 2; left: 0; right: 0; top: 0; height: 51px; display: flex; align-items: center; padding: 0 7px 0 9px; font-size: 24px; color: #bbb; background: #000000a0; }
.crumbs > * { flex: none; }
.star { width: 24px; height: 24px; }
.crumbs i { width: 1px; height: 44px; background: #999; margin: 0 15px 0 9px; }
.arr { width: 21px; height: 27px; color: #999; }
.fwd { transform: scaleX(-1); margin-left: 32px; }
.fwd + i { margin: 0 13px 0 18px; }
.gi { width: 30px; height: 26px; margin-right: 19px; }
.chev { width: 12px; height: 20px; margin: 0 13px 0 11px; }
.crumbs b { margin-left: auto; font-size: 23px; color: #424242; }

.log { display: flex; flex-direction: column; height: 152px; padding: 4px; }
.out { display: flex; align-items: center; height: 96px; padding: 0 0 64px 12px; gap: 16px; color: #999; background: #222; border-radius: 3px; white-space: nowrap; }
.out i { width: 5px; height: 5px; border-radius: 50%; background: #7cc4f8; }
.log button { margin: 12px 5px 0 auto; }

/* details */
.right .tab { margin-left: 4px; }
.right .gold { border-top: 2px solid #b09040; }
.details { position: relative; flex: 1; padding-left: 2px; background: #5f5f5f; font-size: 15px; }
.dsearch { display: flex; align-items: center; height: 32px; padding: 2px 0 0 5px; font-size: 16px; overflow: hidden; }
.dsearch > * { flex: none; }
.dsearch .find { width: 518px; }
.matrix { display: flex; align-items: center; justify-content: center; width: 33px; height: 28px; margin-left: 11px; background: #ccc; border: 1px solid #eee; border-radius: 2px; }
.matrix svg { width: 18px; height: 18px; }
.dsearch .eye { margin: 0 5px; }
.group { margin-bottom: 3px; background: #3e3e3e; }
.group h3 { position: relative; display: flex; align-items: center; gap: 5px; height: 28px; padding-left: 3px; font-size: 17px; text-shadow: 1px 2px 1px #000; background: #2f2f2f; border-radius: 3px 3px 0 0; }
.group.cut { height: 39px; overflow: hidden; margin-bottom: 2px; }
.cut .row { height: 60px; margin-top: -25px; }
.row { position: relative; display: flex; height: 30px; }
.row > label, .lab { position: relative; display: flex; align-items: center; flex: none; width: 207px; padding-left: 20px; overflow: hidden; white-space: nowrap; color: #d4d4d4; }
.row .sh { position: absolute; left: 6px; }
.val { flex: 1; display: flex; align-items: center; padding-left: 4px; border-left: 2px solid #1c1c1c; }
.val input[type=checkbox], .mass input { appearance: none; position: relative; flex: none; width: 18px; height: 18px; background: #aaa; border-radius: 2px; }
.val input[type=checkbox]:checked { background: #ddd; }
.val input[type=checkbox]:checked::after { content: ""; position: absolute; inset: 3px 2px; background: #666; clip-path: polygon(0 55%, 20% 38%, 38% 62%, 80% 0, 100% 14%, 42% 100%); }
.row .mass { gap: 3px; color: #777; }
.short { height: 29px; } .mid { height: 32px; } .tall { height: 98px; } .gap { height: 44px; }
.lit { background: #484848; }
.num { display: flex; align-items: center; width: 132px; height: 21px; margin-left: -1px; padding: 0 6px 0 5px; color: #111; background: #ddd; border-radius: 3px; }
.num input { flex: 1; min-width: 0; }
.num svg { width: 12px; height: 12px; }
.num.dis { width: 124px; height: 24px; color: #333; background: #777; }
.grey { height: 22px; background: linear-gradient(#eee, #aaa); }
.grey select { padding-left: 6px; }
.grey::after { right: 5px; top: 8px; }
.w144 { width: 144px; font-size: 14px; } .w130 { width: 130px; } .w154 { width: 154px; }
.act { width: 15px; height: 15px; margin-left: 15px; color: #ddd; }
.act.dim { color: #aaa; }
.act.small { width: 12px; height: 12px; }
.adv { display: flex; justify-content: center; align-items: center; width: 100%; height: 19px; padding-right: 9px; border-top: 3px solid #3a3a3a; background: #474747; }
.adv svg { width: 12px; height: 10px; }
.thumb { display: flex; align-items: center; justify-content: center; width: 83px; height: 82px; margin-left: 4px; font-size: 12px; text-shadow: 1px 1px 1px #000; background: linear-gradient(#444434, #525038); border-bottom: 4px solid #c8b878; box-shadow: 0 1px 4px #0009; }
.asset { margin-left: 7px; }
.asset > div { display: flex; margin: 8px 0 12px -7px; }
.dark { width: 213px; height: 22px; color: #ddd; background: #585858; border-radius: 3px; }
.dark select { padding-left: 3px; text-shadow: 1px 1px 1px #000; }
.dark::after { right: 4px; top: 8px; }
.thumbbar { position: absolute; right: 0; top: 250px; width: 5px; height: 354px; background: #ccc; }
.tip { position: absolute; z-index: 10; right: 0; top: 28px; width: 778px; height: 41px; padding-left: 11px; line-height: 38px; white-space: nowrap; color: #111; background: #efefef; border: solid #111; border-width: 2px 0 2px 1px; }
.mark-col { left: -17px; top: -6px; width: 129px; height: 39px; }
.mark-pre { left: -16px; top: -7px; width: 396px; height: 43px; }
.strip { height: 5px; background: #333538; }
.strip i { display: block; width: 57px; height: 5px; margin-left: 620px; background: #56565a; }
```
